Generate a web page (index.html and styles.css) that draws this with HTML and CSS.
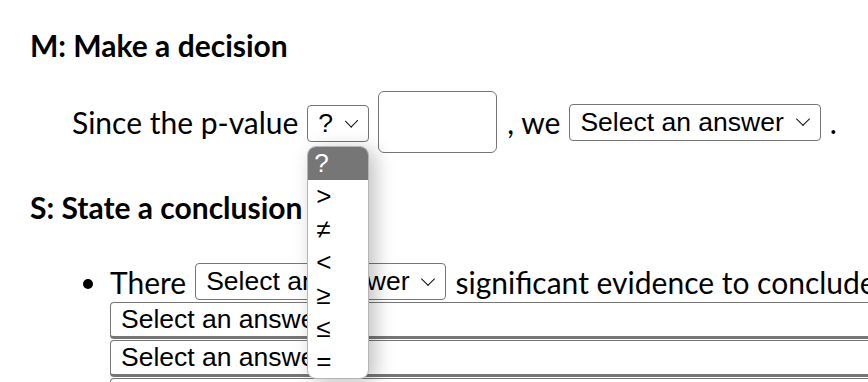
FILE: index.html
```html
<!DOCTYPE html>
<html lang="en">
<head>
  <meta charset="UTF-8">
  <title>Hypothesis test</title>
  <link rel="stylesheet" href="styles.css">
</head>
<body>

  <h3 class="step">M: Make a decision</h3>

  <div class="sentence">
    <span>Since the p-value</span>
    <div class="pick">
      <span class="select select-small">?</span>
      <ul class="menu">
        <li class="active">?</li>
        <li>&gt;</li>
        <li>&ne;</li>
        <li>&lt;</li>
        <li>&ge;</li>
        <li>&le;</li>
        <li>=</li>
      </ul>
    </div>
    <span class="blank"></span>
    <span class="comma">, we</span>
    <span class="select">Select an answer</span>
    <span>.</span>
  </div>

  <h3 class="step step-s">S: State a conclusion</h3>

  <ul class="conclusion">
    <li>
      <div class="line">
        There <span class="select">Select an answer</span> significant evidence to conclude the population mean
      </div>
      <span class="select select-wide">Select an answer</span>
      <span class="select select-wide">Select an answer</span>
      <span class="select select-wide">Select an answer</span>
    </li>
  </ul>

</body>
</html>
```

FILE: styles.css
```css
* {
  box-sizing: border-box;
}
html, body {
  overflow: hidden;
}
body {
  margin: 0;
  padding-left: 30px;
  font-family: Lato, "DejaVu Sans", sans-serif;
  font-size: 30px;
  color: #000;
  background: #fff;
}

.step {
  margin: 27px 0 0;
  font-size: 30px;
  font-weight: bold;
  line-height: 36px;
}
.step-s {
  margin-top: 36px;
}

.sentence {
  display: flex;
  align-items: center;
  gap: 9px;
  margin: 28px 0 0 42px;
  white-space: nowrap;
}

.select {
  display: inline-flex;
  align-items: center;
  height: 37px;
  padding: 0 12px 0 10px;
  border: 1px solid #767676;
  border-radius: 4px;
  font-family: "Liberation Sans", Arial, sans-serif;
  font-size: 26.5px;
  background: #fff;
  white-space: nowrap;
}
/* the little chevron of a closed select */
.select::after {
  content: "";
  width: 9px;
  height: 9px;
  margin: -6px 0 0 14px;
  border-right: 1.7px solid #111;
  border-bottom: 1.7px solid #111;
  transform: rotate(45deg);
}

.pick {
  position: relative;
}
.select-small {
  width: 62px;
}

.blank {
  width: 119px;
  height: 62px;
  border: 1.5px solid #767676;
  border-radius: 6px;
}
.comma {
  margin-left: 1px;
}

.menu {
  position: absolute;
  top: 44px;
  left: 0;
  width: 62px;
  margin: 0;
  padding: 0;
  list-style: none;
  background: #fff;
  border: 1px solid #b5b5b5;
  border-radius: 9px;
  box-shadow: 6px 4px 20px rgba(0, 0, 0, 0.25);
  overflow: hidden;
  z-index: 2;
  font-family: "Liberation Sans", Arial, sans-serif;
  font-size: 26px;
}
.menu li {
  height: 33px;
  line-height: 33px;
  padding-left: 8px;
}
.menu .active {
  background: #767676;
  color: #fff;
  padding-left: 6px;
}

.conclusion {
  margin: 38px 0 0;
  padding-left: 80px;
  width: 1000px;
}
.line {
  display: flex;
  align-items: center;
  gap: 9px;
  height: 37px;
  margin-bottom: 2px;
  white-space: nowrap;
}
.select-wide {
  display: flex;
  width: 900px;
  margin-top: 1px;
  border-bottom-width: 3px;
}
.select-wide::after {
  display: none;
}
```
